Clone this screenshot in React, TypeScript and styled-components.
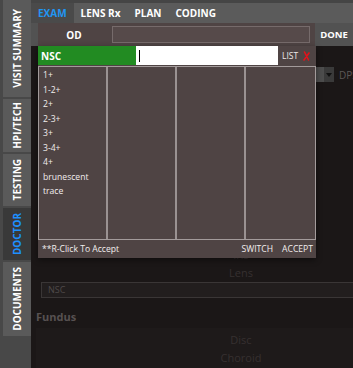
import React from 'react'
import styled, { createGlobalStyle } from 'styled-components'

const GlobalStyle = createGlobalStyle`
  html, body {
    margin: 0;
    padding: 0;
  }
  body {
    background: #1b1717;
    font-family: "Open Sans", "Noto Sans", sans-serif;
    overflow: hidden;
  }
`

const Screen = styled.div`
  display: flex;
  width: 353px;
  height: 368px;
  overflow: hidden;
  background: #1b1717;
`

const SideBar = styled.nav`
  width: 31px;
  flex: none;
  background: #484848;
  display: flex;
  flex-direction: column;
  align-items: flex-end;
  gap: 2px;
`

const SideTab = styled.div<{ $active?: boolean; $h: number }>`
  width: 28px;
  height: ${({ $h }) => $h}px;
  background: ${({ $active }) => ($active ? '#393939' : '#5a5a5a')};
  color: ${({ $active }) => ($active ? '#1e90ff' : '#ffffff')};
  display: flex;
  align-items: center;
  justify-content: center;
`

const SideLabel = styled.span`
  writing-mode: vertical-rl;
  transform: rotate(180deg);
  font-size: 10px;
  font-weight: 700;
  line-height: 14px;
  white-space: nowrap;
`

const Main = styled.div`
  flex: 1;
  display: flex;
  flex-direction: column;
  min-width: 0;
`

const TopBar = styled.div`
  height: 20px;
  border-top: 3px solid #454545;
  background: #5b5b5b;
  display: flex;
`

const TopTab = styled.div<{ $active?: boolean }>`
  padding: 0 7px;
  display: flex;
  align-items: center;
  background: ${({ $active }) => ($active ? '#4a4a4a' : 'transparent')};
  color: ${({ $active }) => ($active ? '#2196f3' : '#ffffff')};
  font-size: 10px;
  font-weight: 700;
  white-space: nowrap;
`

const Stage = styled.div`
  position: relative;
  flex: 1;
  display: flex;
  flex-direction: column;
`

const HeaderRow = styled.div`
  height: 23px;
  background: #525252;
  display: flex;
  flex: none;
`

const EyeBlock = styled.div`
  margin-left: 7px;
  width: 277px;
  background: #4f4444;
  display: flex;
  align-items: center;
`

const EyeLabel = styled.div`
  width: 72px;
  text-align: center;
  color: #fff;
  font-size: 10px;
  font-weight: 700;
`

const HeaderInput = styled.div`
  flex: 1;
  height: 15px;
  margin: 0 5px 0 2px;
  background: #564a4a;
  border: 1px solid #766b6b;
`

const DoneCell = styled.div`
  flex: 1;
  display: flex;
  align-items: center;
  justify-content: center;
  color: #fff;
  font-size: 9.5px;
  font-weight: 700;
`

const Body = styled.div`
  flex: 1;
  display: flex;
`

const Gutter = styled.div`
  width: 2px;
  background: #110e0e;
`

const Form = styled.div`
  flex: 1;
  padding: 21px 0 0 5px;
  display: flex;
  flex-direction: column;
  white-space: nowrap;
`

const SelectRow = styled.div`
  display: flex;
  align-items: center;
  gap: 5px;
  margin-left: 258px;
  height: 15px;
`

const Dropdown = styled.div`
  width: 40px;
  height: 15px;
  background: #4d4d4d;
  display: flex;
  justify-content: flex-end;
`

const DropCaret = styled.div`
  width: 10px;
  background: #3a3a3a;
  display: flex;
  align-items: center;
  justify-content: center;
  &::after {
    content: '';
    border-left: 3px solid transparent;
    border-right: 3px solid transparent;
    border-top: 4px solid #111;
  }
`

const DimText = styled.span`
  color: #5c5656;
  font-size: 10px;
`

const FieldGroup = styled.div<{ $top: number }>`
  margin-top: ${({ $top }) => $top}px;
  display: flex;
  flex-direction: column;
`

const FieldLabel = styled.div`
  margin-left: 133px;
  width: 144px;
  text-align: center;
  line-height: 18px;
  font-size: 11px;
  color: #363030;
`

const NscInput = styled.div`
  margin-left: 5px;
  width: 330px;
  height: 14px;
  background: #221e1e;
  border: 1px solid #3a3636;
  color: #4f4949;
  font-size: 9px;
  line-height: 14px;
  padding-left: 6px;
`

const SectionTitle = styled.div`
  margin-top: 11px;
  font-size: 11px;
  font-weight: 700;
  line-height: 16px;
  color: #575151;
`

const FundusPanel = styled.div`
  margin-top: 3px;
  padding-top: 3px;
  flex: 1;
  background: #1e1a1a;
`

/* popup picker lies over the form */
const Picker = styled.div`
  position: absolute;
  left: 7px;
  top: 23px;
  width: 278px;
  height: 212px;
  background: #4f4444;
  display: flex;
  flex-direction: column;
  box-shadow: 0 2px 6px rgba(0, 0, 0, 0.45);
`

const PickerHead = styled.div`
  height: 19px;
  display: flex;
  align-items: stretch;
`

const GreenTag = styled.div`
  width: 95px;
  padding-left: 3px;
  background: #228b22;
  color: #fff;
  font-size: 10px;
  font-weight: 700;
  display: flex;
  align-items: center;
`

const SearchBox = styled.div`
  width: 139px;
  padding-left: 3px;
  background: #fff;
  display: flex;
  align-items: center;
`

const TextCaret = styled.span`
  width: 1px;
  height: 12px;
  background: #000;
`

const ListLink = styled.div`
  margin-left: 4px;
  color: #ece8e8;
  font-size: 8.5px;
  display: flex;
  align-items: center;
`

const CloseBtn = styled.div`
  margin-left: 5px;
  display: flex;
  align-items: center;
`

const Columns = styled.div`
  margin-top: 1px;
  height: 174px;
  box-sizing: border-box;
  border: 1px solid #a39b9b;
  display: grid;
  grid-template-columns: repeat(4, 1fr);
`

const Column = styled.div`
  padding: 1px 0 0 4px;
  border-right: 2px solid #9a9292;
  &:last-child {
    border-right: none;
  }
`

const Option = styled.div`
  color: #f2eeee;
  font-size: 8.6px;
  line-height: 14.5px;
`

const PickerFoot = styled.div`
  height: 18px;
  display: flex;
  align-items: center;
  gap: 9px;
  padding: 0 3px 0 4px;
  color: #f2eeee;
  font-size: 8.6px;
`

const Hint = styled.span`
  flex: 1;
`

const sideTabs = [
  { label: 'VISIT SUMMARY', h: 97 },
  { label: 'HPI/TECH', h: 53 },
  { label: 'TESTING', h: 52 },
  { label: 'DOCTOR', h: 52, active: true },
  { label: 'DOCUMENTS', h: 74 },
]

const topTabs = ['EXAM', 'LENS Rx', 'PLAN', 'CODING']

const grades = ['1+', '1-2+', '2+', '2-3+', '3+', '3-4+', '4+', 'brunescent', 'trace']

const App = () => {
  return (
    <>
      <GlobalStyle />
      <Screen>
        <SideBar>
          {sideTabs.map((t) => (
            <SideTab key={t.label} $h={t.h} $active={t.active}>
              <SideLabel>{t.label}</SideLabel>
            </SideTab>
          ))}
        </SideBar>
        <Main>
          <TopBar>
            {topTabs.map((t, i) => (
              <TopTab key={t} $active={i === 0}>
                {t}
              </TopTab>
            ))}
          </TopBar>
          <Stage>
            <HeaderRow>
              <EyeBlock>
                <EyeLabel>OD</EyeLabel>
                <HeaderInput />
              </EyeBlock>
              <DoneCell>DONE</DoneCell>
            </HeaderRow>
            <Body>
              <Gutter />
              <Form>
                <SelectRow>
                  <Dropdown>
                    <DropCaret />
                  </Dropdown>
                  <DimText>DPS</DimText>
                </SelectRow>
                <FieldGroup $top={164}>
                  <FieldLabel>Iris</FieldLabel>
                  <FieldLabel>Lens</FieldLabel>
                </FieldGroup>
                <NscInput>NSC</NscInput>
                <SectionTitle>Fundus</SectionTitle>
                <FundusPanel>
                  <FieldLabel>Disc</FieldLabel>
                  <FieldLabel>Choroid</FieldLabel>
                </FundusPanel>
              </Form>
            </Body>
            <Picker>
              <PickerHead>
                <GreenTag>NSC</GreenTag>
                <SearchBox>
                  <TextCaret />
                </SearchBox>
                <ListLink>LIST</ListLink>
                <CloseBtn>
                  <svg width="7" height="10" viewBox="0 0 7 10">
                    <path d="M1.5 1 L5.5 9 M6 2 L1 9" stroke="#e3121a" strokeWidth="1.6" strokeLinecap="round" fill="none" />
                  </svg>
                </CloseBtn>
              </PickerHead>
              <Columns>
                <Column>
                  {grades.map((g) => (
                    <Option key={g}>{g}</Option>
                  ))}
                </Column>
                <Column />
                <Column />
                <Column />
              </Columns>
              <PickerFoot>
                <Hint>**R-Click To Accept</Hint>
                <span>SWITCH</span>
                <span>ACCEPT</span>
              </PickerFoot>
            </Picker>
          </Stage>
        </Main>
      </Screen>
    </>
  )
}

export default App
